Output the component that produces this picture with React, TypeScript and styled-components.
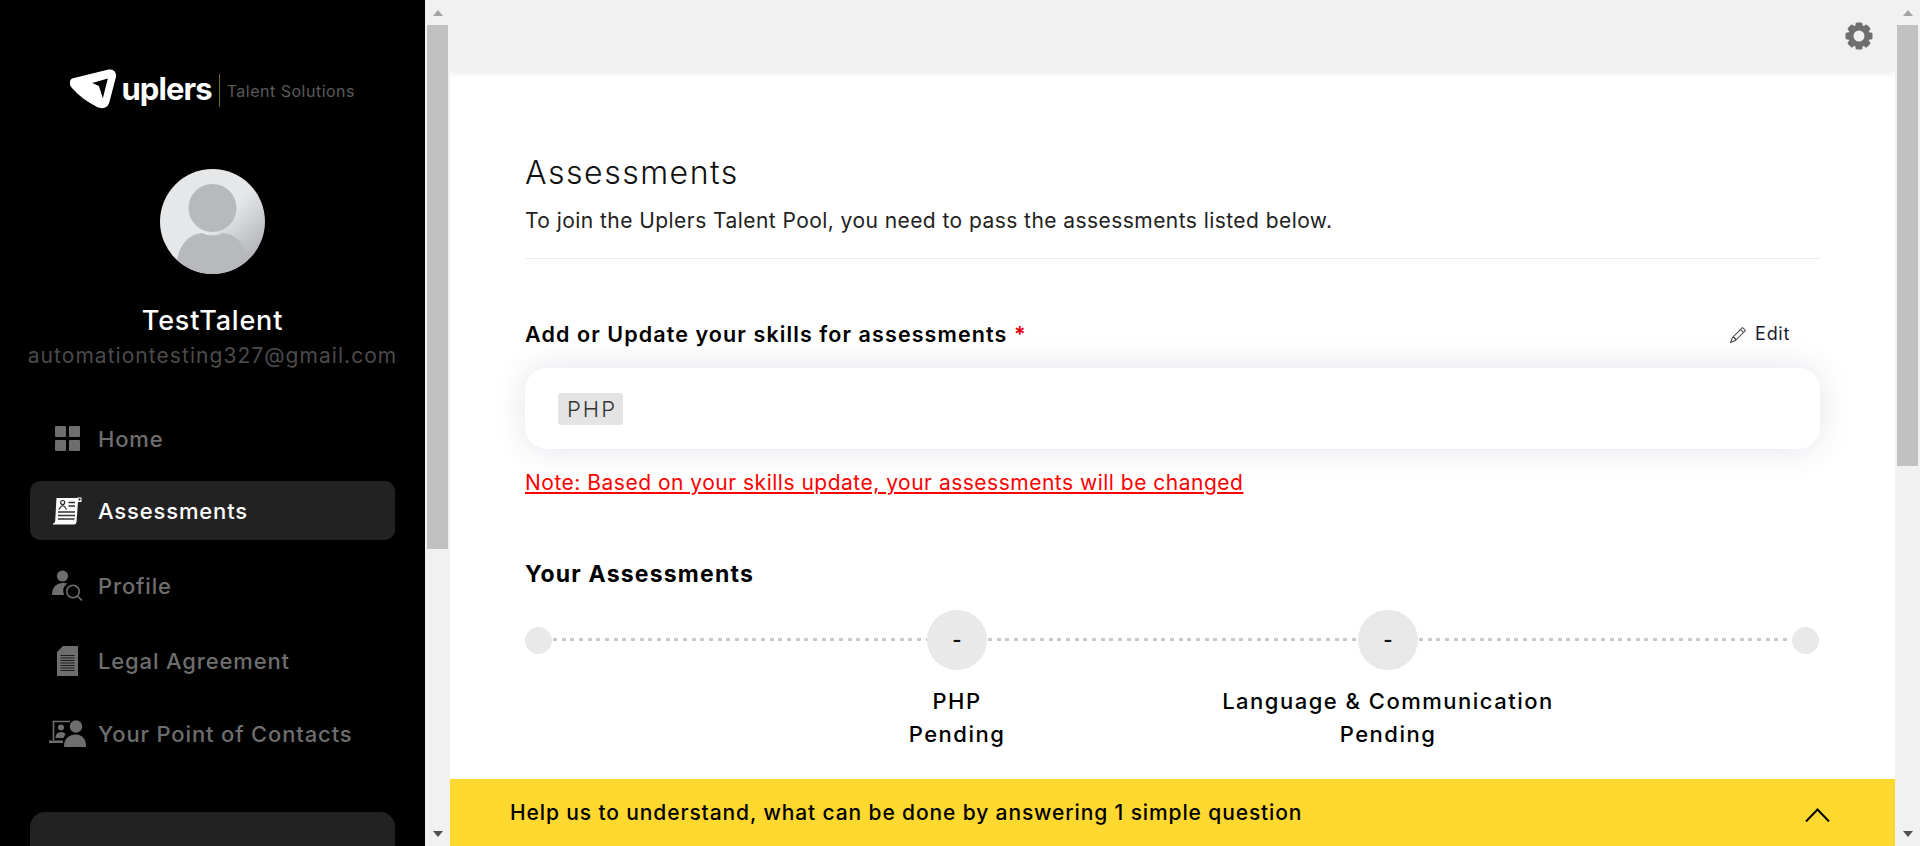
import React from "react";
import styled, { createGlobalStyle } from "styled-components";
import { BsPencil } from "react-icons/bs";

const GlobalStyle = createGlobalStyle`
  html, body {
    margin: 0;
    height: 100%;
    overflow: hidden;
    font-family: Inter, "Liberation Sans", sans-serif;
  }
  * {
    box-sizing: border-box;
  }
`;

const Page = styled.div`
  display: flex;
  height: 846px;
  overflow: hidden;
  background: #fff;
`;

/* the page has two classic scrollbars, one per column */
const ScrollRail = styled.div`
  display: flex;
  flex-direction: column;
  align-items: center;
  flex: none;
  width: 25px;
  height: 846px;
  background: #f1f1f1;
`;

const ScrollButton = styled.div`
  display: flex;
  align-items: center;
  justify-content: center;
  flex: none;
  width: 25px;
  height: 25px;
`;

const ArrowUp = styled.span`
  width: 0;
  height: 0;
  border-left: 5.5px solid transparent;
  border-right: 5.5px solid transparent;
  border-bottom: 6px solid #a3a3a3;
`;

const ArrowDown = styled.span`
  width: 0;
  height: 0;
  border-left: 5.5px solid transparent;
  border-right: 5.5px solid transparent;
  border-top: 6px solid #505050;
`;

const ScrollThumb = styled.div<{ $length: number }>`
  flex: none;
  width: 21px;
  height: ${(p) => p.$length}px;
  background: #c1c1c1;
`;

const ScrollGap = styled.div`
  flex: 1;
`;

/* sidebar */
const Sidebar = styled.aside`
  display: flex;
  flex-direction: column;
  align-items: center;
  flex: none;
  width: 425px;
  height: 846px;
  padding: 69px 30px 0;
  overflow: hidden;
  background: #000;
`;

const Logo = styled.div`
  display: flex;
  align-items: center;
  flex: none;
  height: 40px;
  width: 285px;
`;

const LogoWord = styled.span`
  margin-left: 5px;
  font-size: 31px;
  line-height: 40px;
  font-weight: 700;
  letter-spacing: -0.9px;
  color: #fff;
`;

const LogoRule = styled.span`
  width: 1px;
  height: 33px;
  margin: 2px 7px 0 7px;
  background: #7a6420;
`;

const LogoTag = styled.span`
  margin-top: 3px;
  font-size: 16px;
  letter-spacing: 0.5px;
  color: #5a5a5a;
  white-space: nowrap;
`;

const AvatarWrap = styled.div`
  flex: none;
  width: 105px;
  height: 105px;
  margin-top: 60px;
`;

const UserName = styled.div`
  margin-top: 31px;
  font-size: 27px;
  line-height: 32px;
  font-weight: 500;
  letter-spacing: 0.8px;
  color: #fff;
`;

const UserMail = styled.div`
  margin-top: 5px;
  font-size: 21px;
  line-height: 28px;
  letter-spacing: 1.05px;
  color: #4b4b4b;
  white-space: nowrap;
`;

const Nav = styled.nav`
  display: flex;
  flex-direction: column;
  flex: none;
  width: 100%;
  margin-top: 39px;
`;

const NavItem = styled.a<{ $active?: boolean; $top: number }>`
  display: flex;
  align-items: center;
  gap: 8px;
  height: 59px;
  margin-top: ${(p) => p.$top}px;
  padding-left: 15px;
  border-radius: 10px;
  font-size: 22px;
  font-weight: 500;
  letter-spacing: 0.85px;
  color: ${(p) => (p.$active ? "#fff" : "#6e6e6e")};
  background: ${(p) => (p.$active ? "#222" : "transparent")};
`;

const NavIcon = styled.span`
  display: flex;
  align-items: center;
  justify-content: center;
  width: 45px;
  flex: none;
`;

const PromoCard = styled.div`
  flex: none;
  width: 100%;
  height: 300px;
  margin-top: 49px;
  border-radius: 15px;
  background: #222;
`;

/* main column */
const Main = styled.main`
  position: relative;
  flex: 1;
  min-width: 0;
  height: 846px;
  overflow: hidden;
`;

const TopBar = styled.header`
  display: flex;
  align-items: center;
  justify-content: flex-end;
  height: 72px;
  padding-right: 22px;
  background: #f1f1f1;
  box-shadow: 0 2px 6px rgba(0, 0, 0, 0.07);
`;

const Body = styled.section`
  padding: 81px 75px 0;
`;

const Title = styled.h1`
  margin: 0;
  font-size: 32px;
  line-height: 40px;
  font-weight: 300;
  letter-spacing: 1.5px;
  color: #111;
`;

const Lead = styled.p`
  margin: 13px 0 0;
  font-size: 21px;
  line-height: 30px;
  letter-spacing: 0.44px;
  color: #222;
`;

const Rule = styled.hr`
  height: 1px;
  margin: 22px 0 0;
  border: 0;
  background: #eee;
`;

const LabelRow = styled.div`
  display: flex;
  align-items: center;
  justify-content: space-between;
  margin-top: 60px;
  height: 30px;
`;

const Label = styled.label`
  font-size: 21.5px;
  line-height: 30px;
  font-weight: 600;
  letter-spacing: 1.1px;
  color: #000;
`;

const Star = styled.span`
  color: #e3000f;
`;

const EditLink = styled.a`
  display: flex;
  align-items: center;
  gap: 9px;
  margin: -2px 30px 0 0;
  font-size: 18px;
  letter-spacing: 0.7px;
  color: #1b1b33;
  svg {
    color: #444;
    margin-top: 3px;
  }
`;

const SkillBox = styled.div`
  display: flex;
  align-items: center;
  height: 81px;
  margin-top: 19px;
  padding-left: 33px;
  border-radius: 22px;
  background: #fff;
  box-shadow: 0 0 32px rgba(40, 50, 100, 0.13);
`;

const Chip = styled.span`
  display: block;
  width: 65px;
  height: 32px;
  padding-left: 3px;
  border-radius: 3px;
  background: #e4e4e4;
  font-size: 22px;
  font-weight: 300;
  line-height: 32px;
  letter-spacing: 2px;
  text-align: center;
  color: #333;
`;

const Note = styled.a`
  display: block;
  margin-top: 19px;
  font-size: 21px;
  line-height: 30px;
  letter-spacing: 0.5px;
  color: #f00;
  text-decoration: underline;
`;

const SectionTitle = styled.h2`
  margin: 61px 0 0;
  font-size: 23px;
  line-height: 30px;
  font-weight: 700;
  letter-spacing: 1.2px;
  color: #000;
`;

const Stepper = styled.div`
  display: grid;
  grid-template-columns: 27px 375px 60px 371px 60px 1fr 28px;
  align-items: center;
  margin-top: 21px;
`;

const Dot = styled.span`
  display: block;
  width: 27px;
  height: 27px;
  border-radius: 50%;
  background: #e9e9e9;
`;

const StepCircle = styled.span`
  display: flex;
  align-items: center;
  justify-content: center;
  width: 60px;
  height: 60px;
  border-radius: 50%;
  background: #e9e9e9;
  font-size: 20px;
  font-weight: 600;
  color: #111;
`;

const DottedLine = styled.span`
  display: block;
  height: 3px;
  margin: 0 0 1px 1px;
  background: repeating-linear-gradient(to right, #c8c8c8 0 4px, transparent 4px 8.67px);
`;

const StepLabel = styled.div<{ $col: number }>`
  grid-column: ${(p) => p.$col};
  justify-self: center;
  width: max-content;
  margin-top: 15px;
  font-size: 22px;
  line-height: 33px;
  font-weight: 500;
  letter-spacing: 1.5px;
  text-align: center;
  color: #000;
`;

const HelpBar = styled.div`
  position: absolute;
  left: 0;
  right: 0;
  bottom: 0;
  display: flex;
  align-items: center;
  justify-content: space-between;
  height: 67px;
  padding: 0 65px 0 60px;
  background: #ffd830;
  font-size: 21px;
  font-weight: 500;
  letter-spacing: 0.88px;
  color: #000;
`;

const HelpChevron = styled.svg`
  width: 25px;
  height: 14px;
  margin-top: 4px;
`;

const GearIcon = () => (
  <svg width="28" height="28" viewBox="0 0 28 28" fill="#6f6f6f">
    {[0, 45, 90, 135, 180, 225, 270, 315].map((deg) => (
      <rect key={deg} x="10.5" y="0.5" width="7" height="6" rx="1.5" transform={`rotate(${deg} 14 14)`} />
    ))}
    <circle cx="14" cy="14" r="8.2" fill="none" stroke="#6f6f6f" strokeWidth="5.4" />
  </svg>
);

const HomeIcon = () => (
  <svg width="25" height="25" viewBox="0 0 25 25" fill="#6e6e6e">
    <rect width="11" height="11" rx="1" />
    <rect x="14" width="11" height="11" rx="1" />
    <rect y="14" width="11" height="11" rx="1" />
    <rect x="14" y="14" width="11" height="11" rx="1" />
  </svg>
);

const AssessIcon = () => (
  <svg width="29" height="28" viewBox="0 0 29 28">
    <path fill="#fff" d="M3.5 1H24.5V0.5L28.5 0.5V5H25L23.5 25Q23.3 27.5 21 27.5H0V26.5Q2 26 2.2 24Z" />
    <circle cx="9.7" cy="5.5" r="2" fill="none" stroke="#222" strokeWidth="1.1" />
    <path d="M6 12.5Q9.7 5 13.5 12.5" fill="none" stroke="#222" strokeWidth="1.1" />
    <path d="M15.5 5.5H22M15.5 9H22M5 15H22M5 18.5H22M5 22H21.5" stroke="#333" strokeWidth="1.4" />
    <rect x="25.5" y="1.5" width="2" height="2" fill="#222" />
  </svg>
);

const ProfileIcon = () => (
  <svg width="31" height="31" viewBox="0 0 31 31" fill="#6e6e6e">
    <circle cx="10.5" cy="6" r="5.6" />
    <path d="M0 24.5Q0 14 10.5 12.8Q13.5 12.8 15.5 13.8Q12 15.5 11.2 19.5Q11 22.5 12.2 25H0Z" />
    <circle cx="21" cy="21.5" r="6.2" fill="none" stroke="#6e6e6e" strokeWidth="1.6" />
    <path d="M25.5 26L30 30.5" stroke="#6e6e6e" strokeWidth="1.6" />
  </svg>
);

const LegalIcon = () => (
  <svg width="21" height="30" viewBox="0 0 21 30">
    <path fill="#6e6e6e" d="M6 0H21V30H0V6Z" />
    <path stroke="#1c1c1c" strokeWidth="1" d="M3.5 9.5H17.5M3.5 12H17.5M3.5 14.5H17.5M3.5 17H17.5M3.5 19.5H17.5M3.5 22H17.5M3.5 24.5H17.5" />
  </svg>
);

const ContactIcon = () => (
  <svg width="37" height="27" viewBox="0 0 37 27" fill="#6e6e6e">
    <path fill="none" stroke="#6e6e6e" strokeWidth="1.6" d="M4.5 20V1.5H21" />
    <path d="M0 20.5H14V23H0Z" />
    <circle cx="12" cy="7.5" r="3" />
    <path d="M6.5 18Q6.5 12 12 12Q15 12 16.5 14L14.5 18Z" />
    <circle cx="27" cy="6.5" r="6.2" />
    <path d="M15 27Q15 15 27 14.5Q37 15 37 27Z" />
  </svg>
);

const navItems = [
  { label: "Home", icon: <HomeIcon />, top: 0 },
  { label: "Assessments", icon: <AssessIcon />, top: 13, active: true },
  { label: "Profile", icon: <ProfileIcon />, top: 16 },
  { label: "Legal Agreement", icon: <LegalIcon />, top: 16 },
  { label: "Your Point of Contacts", icon: <ContactIcon />, top: 14 },
];

const Scrollbar = ({ thumb }: { thumb: number }) => (
  <ScrollRail>
    <ScrollButton>
      <ArrowUp />
    </ScrollButton>
    <ScrollThumb $length={thumb} />
    <ScrollGap />
    <ScrollButton>
      <ArrowDown />
    </ScrollButton>
  </ScrollRail>
);

const App = () => {
  return (
    <Page>
      <GlobalStyle />
      <Sidebar>
        <Logo>
          <svg width="47" height="40" viewBox="0 0 47 40">
            <path
              fill="#fff"
              d="M3 9L38 0.5C44 -0.5 47.5 3 46.5 8L40 33C38.5 39.5 33 41 27 38C17 33 9 27 2 19C-1.5 15 -1 10.5 3 9Z"
            />
            <path fill="#000" d="M38.3 9.3L33.3 29.3L29.3 17L22.5 14Z" />
          </svg>
          <LogoWord>uplers</LogoWord>
          <LogoRule />
          <LogoTag>Talent Solutions</LogoTag>
        </Logo>
        <AvatarWrap>
          <svg width="105" height="105" viewBox="0 0 105 105">
            <defs>
              <linearGradient id="avatarBg" x1="0.3" y1="0.3" x2="0.9" y2="0.95">
                <stop offset="0.35" stopColor="#e6e7e9" />
                <stop offset="1" stopColor="#a9aaae" />
              </linearGradient>
              <clipPath id="avatarClip">
                <circle cx="52.5" cy="52.5" r="52.5" />
              </clipPath>
            </defs>
            <circle cx="52.5" cy="52.5" r="52.5" fill="url(#avatarBg)" />
            <g clipPath="url(#avatarClip)" fill="#b8b9bd">
              <circle cx="52.5" cy="39" r="24" />
              <path d="M17 105V96C17 78 28 65 42 64Q52.5 69 63 64C77 65 88 78 88 96V105Z" />
            </g>
          </svg>
        </AvatarWrap>
        <UserName>TestTalent</UserName>
        <UserMail>automationtesting327@gmail.com</UserMail>
        <Nav>
          {navItems.map((item) => (
            <NavItem key={item.label} $active={item.active} $top={item.top}>
              <NavIcon>{item.icon}</NavIcon>
              {item.label}
            </NavItem>
          ))}
        </Nav>
        <PromoCard />
      </Sidebar>
      <Scrollbar thumb={524} />
      <Main>
        <TopBar>
          <GearIcon />
        </TopBar>
        <Body>
          <Title>Assessments</Title>
          <Lead>To join the Uplers Talent Pool, you need to pass the assessments listed below.</Lead>
          <Rule />
          <LabelRow>
            <Label>
              Add or Update your skills for assessments <Star>*</Star>
            </Label>
            <EditLink>
              <BsPencil size={16} />
              Edit
            </EditLink>
          </LabelRow>
          <SkillBox>
            <Chip>PHP</Chip>
          </SkillBox>
          <Note>Note: Based on your skills update, your assessments will be changed</Note>
          <SectionTitle>Your Assessments</SectionTitle>
          <Stepper>
            <Dot />
            <DottedLine />
            <StepCircle>-</StepCircle>
            <DottedLine />
            <StepCircle>-</StepCircle>
            <DottedLine />
            <Dot />
            <StepLabel $col={3}>
              PHP
              <br />
              Pending
            </StepLabel>
            <StepLabel $col={5}>
              Language &amp; Communication
              <br />
              Pending
            </StepLabel>
          </Stepper>
        </Body>
        <HelpBar>
          Help us to understand, what can be done by answering 1 simple question
          <HelpChevron viewBox="0 0 25 14" fill="none" stroke="#000" strokeWidth="2">
            <path d="M1 13.5L12.5 1.5L24 13.5" />
          </HelpChevron>
        </HelpBar>
      </Main>
      <Scrollbar thumb={441} />
    </Page>
  );
};

export default App;
